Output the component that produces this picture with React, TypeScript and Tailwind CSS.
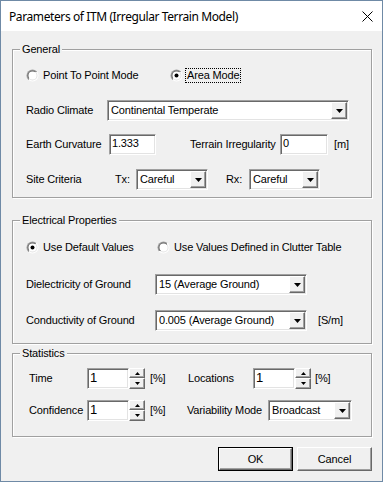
import React from "react";

const sunken =
  "border border-t-[#a0a0a0] border-l-[#a0a0a0] border-b-white border-r-white shadow-[inset_1px_1px_0_#696969,inset_-1px_-1px_0_#e3e3e3] bg-white";
const raised =
  "border border-t-white border-l-white border-b-[#696969] border-r-[#696969] shadow-[inset_-1px_-1px_0_#a0a0a0] bg-[#f0f0f0]";

function Radio({ checked }: { checked?: boolean }) {
  return (
    <svg width="13" height="13" viewBox="0 0 13 13" className="shrink-0">
      <defs>
        <linearGradient id="ro" x1="0" y1="0" x2="1" y2="1">
          <stop offset="0.5" stopColor="#a0a0a0" />
          <stop offset="0.5" stopColor="#ffffff" />
        </linearGradient>
        <linearGradient id="ri" x1="0" y1="0" x2="1" y2="1">
          <stop offset="0.5" stopColor="#696969" />
          <stop offset="0.5" stopColor="#e3e3e3" />
        </linearGradient>
      </defs>
      <circle cx="6.5" cy="6.5" r="6" fill="url(#ro)" />
      <circle cx="6.5" cy="6.5" r="5" fill="url(#ri)" />
      <circle cx="6.5" cy="6.5" r="4" fill="#ffffff" />
      {checked && <circle cx="6.5" cy="6.5" r="2" fill="#000000" />}
    </svg>
  );
}

function DropBtn() {
  return (
    <div className={`${raised} m-[1px] h-[17px] w-[16px] shrink-0 flex items-center justify-center`}>
      <svg width="7" height="4" viewBox="0 0 7 4">
        <polygon points="0,0 7,0 3.5,4" fill="#000" />
      </svg>
    </div>
  );
}

function Combo({ value, w }: { value: string; w: string }) {
  return (
    <div className={`${sunken} ${w} h-[21px] flex items-center shrink-0`}>
      <span className="flex-1 pl-[3px] whitespace-nowrap overflow-hidden">{value}</span>
      <DropBtn />
    </div>
  );
}

function Edit({ value, w }: { value: string; w: string }) {
  return (
    <div className={`${sunken} ${w} h-[21px] flex items-center pl-[2px] shrink-0`}>
      <span className="-mt-[3px]">{value}</span>
    </div>
  );
}

function Spin({ value }: { value: string }) {
  return (
    <div className="flex shrink-0 w-[58px] h-[21px]">
      <div className={`${sunken} w-[42px] h-[21px] flex items-start pl-[2px] pt-[1px] text-[13px] leading-[15px]`}>
        {value}
      </div>
      <div className="flex flex-col w-[16px]">
        <div className={`${raised} h-[10px] flex items-center justify-center`}>
          <svg width="5" height="3" viewBox="0 0 5 3">
            <polygon points="2.5,0 5,3 0,3" fill="#000" />
          </svg>
        </div>
        <div className={`${raised} h-[11px] flex items-center justify-center`}>
          <svg width="5" height="3" viewBox="0 0 5 3">
            <polygon points="0,0 5,0 2.5,3" fill="#000" />
          </svg>
        </div>
      </div>
    </div>
  );
}

function Group({ label, h, className, children }: { label: string; h: string; className?: string; children: React.ReactNode }) {
  return (
    <div
      className={`relative ml-[11px] w-[360px] ${h} border border-[#a0a0a0] shadow-[inset_1px_1px_0_#fff,1px_1px_0_#fff] ${className ?? ""}`}
    >
      <span className="absolute left-[7px] top-[-7px] px-[2px] bg-[#f0f0f0] leading-[13px]">{label}</span>
      {children}
    </div>
  );
}

export default function App() {
  return (
    <div className="w-[383px] h-[482px] border border-[#6f8aa6] bg-[#f0f0f0] flex flex-col text-black text-[11px] leading-[13px] tracking-[-0.15px] font-['Liberation_Sans',Arial,sans-serif]">
      {/* title bar */}
      <div className="h-[30px] bg-white flex items-center pl-[8px] pr-[9px] shrink-0">
        <span className="flex-1 text-[12px] tracking-[-0.4px] font-['Noto_Sans','Open_Sans',sans-serif] text-[#000]">
          Parameters of ITM (Irregular Terrain Model)
        </span>
        <svg width="11" height="11" viewBox="0 0 11 11">
          <path d="M0.5 0.5 L10.5 10.5 M10.5 0.5 L0.5 10.5" stroke="#000" strokeWidth="1" />
        </svg>
      </div>

      {/* General */}
      <Group label="General" h="h-[149px]" className="mt-[18px] pl-[13px] pt-[15px]">
        <div className="flex h-[21px] items-center">
          <div className="flex items-center w-[144px]">
            <Radio />
            <span className="ml-[4px]">Point To Point Mode</span>
          </div>
          <div className="flex items-center">
            <Radio checked />
            <span className="ml-[2px] border border-dotted border-black px-[1px] leading-[13px]">Area Mode</span>
          </div>
        </div>
        <div className="flex h-[21px] items-center mt-[14px]">
          <span className="w-[81px] shrink-0">Radio Climate</span>
          <Combo value="Continental Temperate" w="w-[242px]" />
        </div>
        <div className="flex h-[21px] items-center mt-[13px]">
          <span className="w-[83px] shrink-0">Earth Curvature</span>
          <Edit value="1.333" w="w-[47px]" />
          <span className="ml-[34px] w-[90px] shrink-0">Terrain Irregularity</span>
          <Edit value="0" w="w-[48px]" />
          <span className="ml-[6px]">[m]</span>
        </div>
        <div className="flex h-[21px] items-center mt-[14px]">
          <span className="w-[89px] shrink-0">Site Criteria</span>
          <span className="w-[21px] shrink-0">Tx:</span>
          <Combo value="Careful" w="w-[72px]" />
          <span className="ml-[18px] w-[23px] shrink-0">Rx:</span>
          <Combo value="Careful" w="w-[71px]" />
        </div>
      </Group>

      {/* Electrical */}
      <Group label="Electrical Properties" h="h-[124px]" className="mt-[22px] pl-[13px] pt-[16px]">
        <div className="flex h-[21px] items-center">
          <div className="flex items-center w-[131px]">
            <Radio checked />
            <span className="ml-[4px]">Use Default Values</span>
          </div>
          <div className="flex items-center">
            <Radio />
            <span className="ml-[4px]">Use Values Defined in Clutter Table</span>
          </div>
        </div>
        <div className="flex h-[21px] items-center mt-[16px]">
          <span className="w-[129px] shrink-0">Dielectricity of Ground</span>
          <Combo value="15 (Average Ground)" w="w-[152px]" />
        </div>
        <div className="flex h-[21px] items-center mt-[15px]">
          <span className="w-[129px] shrink-0">Conductivity of Ground</span>
          <Combo value="0.005 (Average Ground)" w="w-[152px]" />
          <span className="ml-[11px]">[S/m]</span>
        </div>
      </Group>

      {/* Statistics */}
      <Group label="Statistics" h="h-[84px]" className="mt-[9px] pl-[16px] pt-[14px]">
        <div className="flex h-[21px] items-center">
          <div className="flex items-center w-[159px] shrink-0">
            <span className="w-[58px] shrink-0">Time</span>
            <Spin value="1" />
            <span className="ml-[5px]">[%]</span>
          </div>
          <span className="w-[65px] shrink-0">Locations</span>
          <Spin value="1" />
          <span className="ml-[4px]">[%]</span>
        </div>
        <div className="flex h-[21px] items-center mt-[11px]">
          <div className="flex items-center w-[158px] shrink-0">
            <span className="w-[58px] shrink-0">Confidence</span>
            <Spin value="1" />
            <span className="ml-[5px]">[%]</span>
          </div>
          <span className="w-[81px] shrink-0">Variability Mode</span>
          <Combo value="Broadcast" w="w-[84px]" />
        </div>
      </Group>

      {/* Buttons */}
      <div className="flex justify-end gap-[4px] pr-[10px] mt-[10px]">
        <button className="w-[75px] h-[24px] border border-black bg-[#f0f0f0] p-0">
          <div className="w-full h-full border border-t-white border-l-white border-b-[#696969] border-r-[#696969] shadow-[inset_-1px_-1px_0_#a0a0a0] flex items-center justify-center">
            OK
          </div>
        </button>
        <button className={`${raised} w-[75px] h-[24px] flex items-center justify-center p-0`}>Cancel</button>
      </div>
    </div>
  );
}
